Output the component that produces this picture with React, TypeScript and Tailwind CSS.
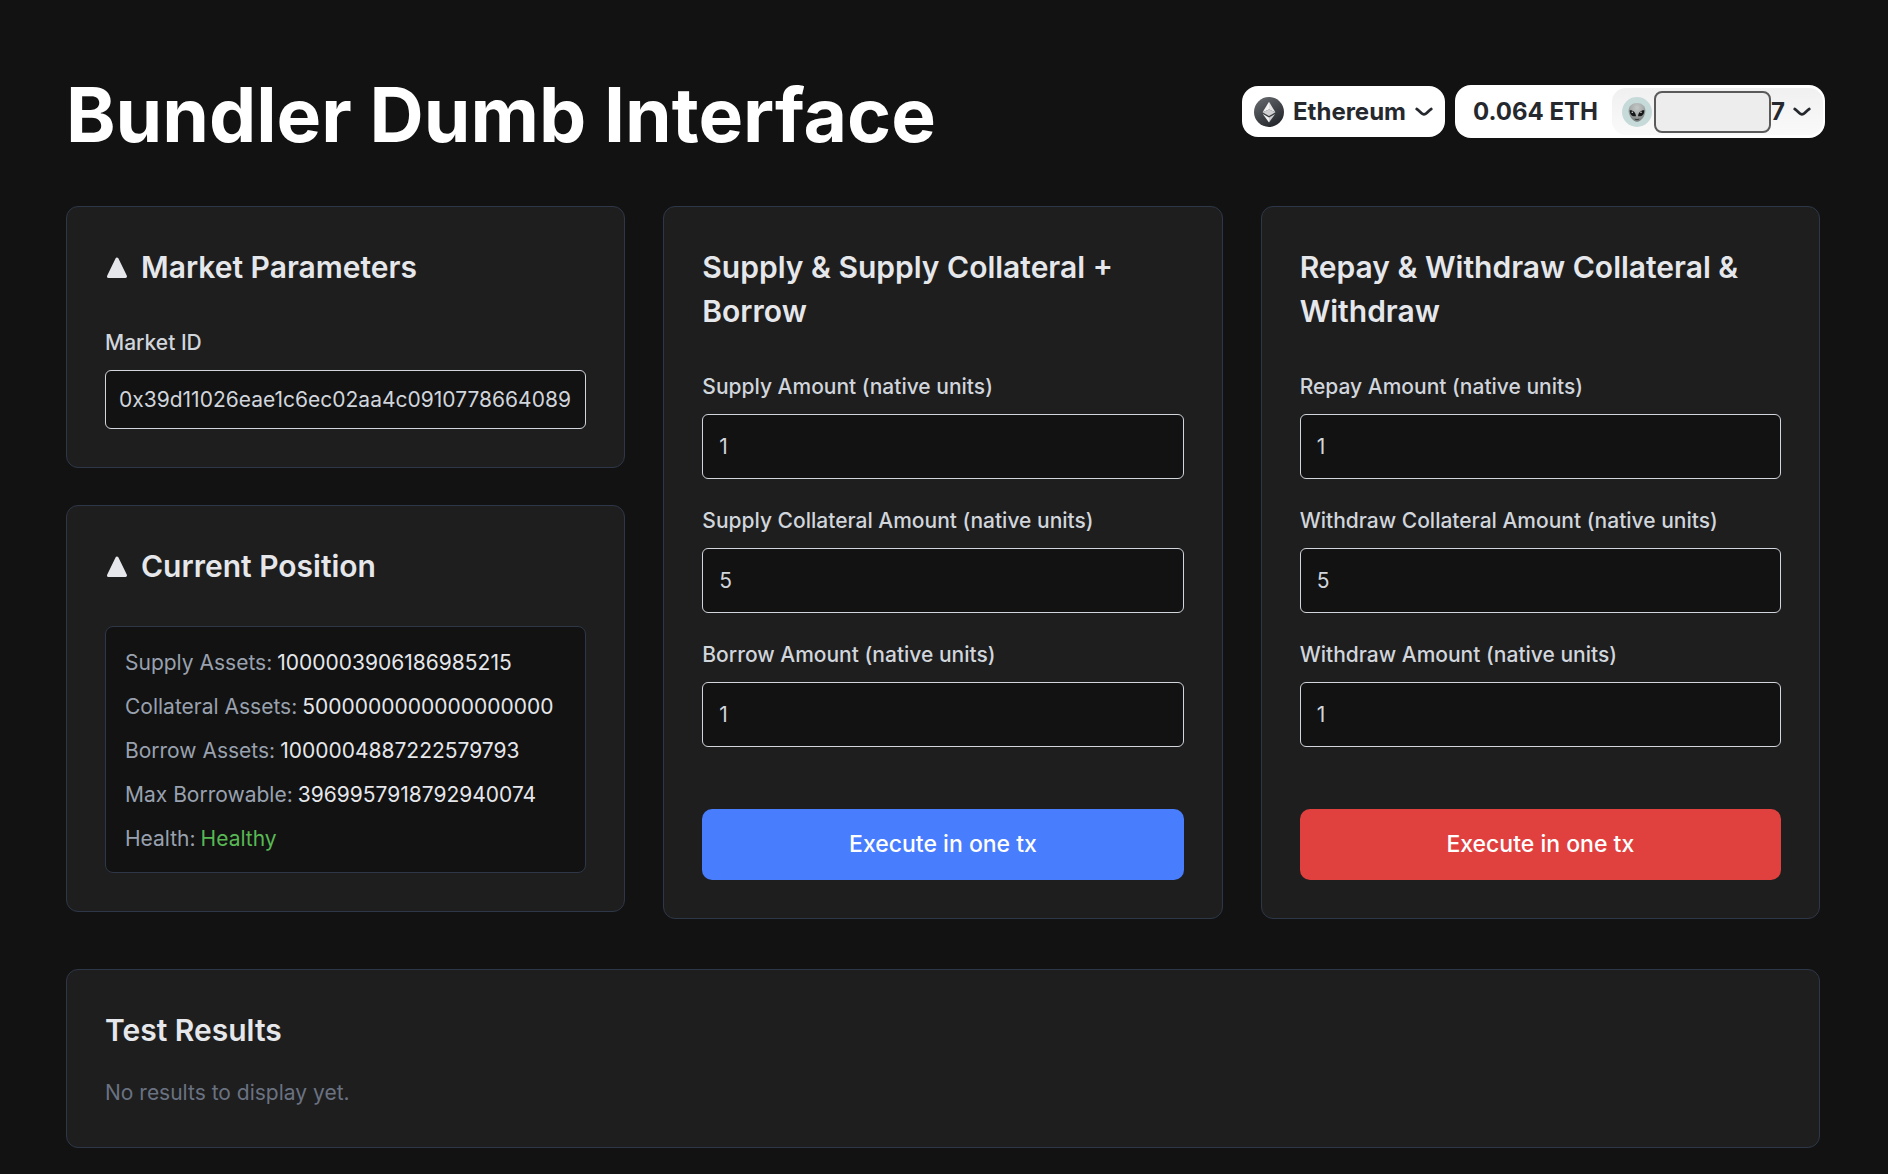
import { useId, useState, type ReactNode } from "react";

function Chevron() {
  return (
    <svg width="18" height="10" viewBox="0 0 18 10" fill="none" aria-hidden="true" className="shrink-0">
      <path
        d="M1.7 2 C4 3.2 6.8 7.4 9 7.4 C11.2 7.4 14 3.2 16.3 2"
        stroke="#25292e"
        strokeWidth="2.7"
        strokeLinecap="round"
      />
    </svg>
  );
}

function EthereumLogo() {
  return (
    <svg width="30" height="30" viewBox="0 0 30 30" aria-hidden="true" className="shrink-0">
      <defs>
        <linearGradient id="eth-disc" x1="0" y1="0" x2="0.6" y2="1">
          <stop offset="0" stopColor="#6b6e72" />
          <stop offset="1" stopColor="#25282c" />
        </linearGradient>
      </defs>
      <circle cx="15" cy="15" r="15" fill="url(#eth-disc)" />
      <path d="M15 4.8 L8.6 15.3 L15 12.5 Z" fill="#f4f4f4" />
      <path d="M15 4.8 L21.4 15.3 L15 12.5 Z" fill="#e4e4e4" />
      <path d="M8.6 15.3 L15 12.5 L21.4 15.3 L15 19 Z" fill="#d0d0d2" />
      <path d="M8.8 16.9 L15 20.5 V25.4 Z" fill="#f4f4f4" />
      <path d="M21.2 16.9 L15 20.5 V25.4 Z" fill="#cfcfd1" />
    </svg>
  );
}

function AlienAvatar() {
  return (
    <svg width="30" height="30" viewBox="0 0 30 30" aria-hidden="true" className="shrink-0">
      <defs>
        <radialGradient id="alien-skin" cx="0.5" cy="0.25" r="0.75">
          <stop offset="0" stopColor="#c3c8c7" />
          <stop offset="0.5" stopColor="#a8adac" />
          <stop offset="1" stopColor="#6f7473" />
        </radialGradient>
      </defs>
      <circle cx="15" cy="15" r="15" fill="#c5dad9" />
      <path
        d="M15 6 C20 6 23.4 9.2 23.4 13.8 C23.4 18.8 19 24.8 15 24.8 C11 24.8 6.6 18.8 6.6 13.8 C6.6 9.2 10 6 15 6 Z"
        fill="url(#alien-skin)"
      />
      <path d="M7.7 13.2 C10.7 12.8 13.7 15 14 19.2 C10.4 20 7.6 17.6 7.7 13.2 Z" fill="#161818" />
      <path d="M22.3 13.2 C19.3 12.8 16.3 15 16 19.2 C19.6 20 22.4 17.6 22.3 13.2 Z" fill="#161818" />
      <circle cx="10.3" cy="15.3" r="0.8" fill="#d8dcdb" />
      <circle cx="19" cy="15.3" r="0.8" fill="#d8dcdb" />
      <path d="M12.8 22 C14.2 22.9 15.8 22.9 17.2 22" stroke="#333636" strokeWidth="1" fill="none" />
    </svg>
  );
}

function Triangle() {
  return (
    <svg width="24" height="24" viewBox="0 0 24 24" aria-hidden="true" className="shrink-0">
      <path
        d="M12 4 L20.5 21.5 H3.5 Z"
        fill="#e5e7eb"
        stroke="#e5e7eb"
        strokeWidth="3"
        strokeLinejoin="round"
      />
    </svg>
  );
}

function Card({ children }: { children: ReactNode }) {
  return (
    <section className="rounded-xl border border-[#2d3748] bg-[#1e1e1e] p-[38px]">{children}</section>
  );
}

function CollapsibleCard({ title, children }: { title: string; children: ReactNode }) {
  const [open, setOpen] = useState(true);
  return (
    <Card>
      <h2 className="text-[30px] leading-[44px] font-semibold text-gray-200">
        <button
          type="button"
          aria-expanded={open}
          onClick={() => setOpen(!open)}
          className="flex items-center gap-3"
        >
          <Triangle />
          {title}
        </button>
      </h2>
      {open && <div className="mt-[38px]">{children}</div>}
    </Card>
  );
}

function Field({ label, initial, compact = false }: { label: string; initial: string; compact?: boolean }) {
  const id = useId();
  const [value, setValue] = useState(initial);
  return (
    <div>
      <label htmlFor={id} className="mb-[11px] block text-[21px] leading-8 font-medium text-gray-300">
        {label}
      </label>
      <input
        id={id}
        type="text"
        value={value}
        onChange={(e) => setValue(e.target.value)}
        className={`block w-full rounded-md border border-gray-300 bg-[#121212] text-[21px] text-gray-300 outline-none ${
          compact ? "h-[59px] px-[13px]" : "h-[65px] px-4"
        }`}
      />
    </div>
  );
}

function ActionCard({
  title,
  fields,
  buttonClass,
}: {
  title: string;
  fields: { label: string; value: string }[];
  buttonClass: string;
}) {
  return (
    <Card>
      <h2 className="text-[30px] leading-[44px] font-semibold text-gray-200">{title}</h2>
      <div className="mt-[38px] flex flex-col gap-[26px]">
        {fields.map((f) => (
          <Field key={f.label} label={f.label} initial={f.value} />
        ))}
      </div>
      <button
        type="button"
        className={`mt-[62px] h-[71px] w-full rounded-[10px] text-[23px] font-medium text-white ${buttonClass}`}
      >
        Execute in one tx
      </button>
    </Card>
  );
}

const position = [
  { label: "Supply Assets:", value: "1000003906186985215" },
  { label: "Collateral Assets:", value: "5000000000000000000" },
  { label: "Borrow Assets:", value: "1000004887222579793" },
  { label: "Max Borrowable:", value: "3969957918792940074" },
  { label: "Health:", value: "Healthy", healthy: true },
];

export default function App() {
  return (
    <div className="min-h-screen bg-[#121212] pt-16 pr-[68px] pb-7 pl-[66px] font-['Inter',sans-serif]">
      <header className="-mr-[5px] mb-10 flex items-start justify-between">
        <h1 className="text-[75px] leading-[102px] font-bold text-white">Bundler Dumb Interface</h1>
        <div className="mt-[21px] flex items-center gap-[10px] text-2xl font-bold text-[#25292e]">
          <button type="button" className="flex h-[51px] items-center gap-[9px] rounded-2xl bg-white px-3">
            <EthereumLogo />
            Ethereum
            <Chevron />
          </button>
          <button type="button" className="flex h-[53px] items-center rounded-2xl bg-white pr-[2px] pl-[18px]">
            <span className="pr-[14px]">0.064 ETH</span>
            <span className="flex h-[47px] items-center rounded-[14px] bg-linear-to-b from-[#f0f0f0] to-[#fafafa] pr-3 pl-[10px]">
              <AlienAvatar />
              <span className="ml-[2px] h-[42px] w-[117px] rounded-lg border-2 border-[#5a5a5a] bg-[#ededed]" />
              <span className="mr-2">7</span>
              <Chevron />
            </span>
          </button>
        </div>
      </header>

      <main>
        <div className="grid grid-cols-3 items-start gap-[38px]">
          <div className="flex flex-col gap-[37px]">
            <CollapsibleCard title="Market Parameters">
              <Field label="Market ID" initial="0x39d11026eae1c6ec02aa4c0910778664089" compact />
            </CollapsibleCard>
            <CollapsibleCard title="Current Position">
              <dl className="flex flex-col gap-3 rounded-lg border border-[#2d3748] bg-[#121212] px-[19px] pt-5 pb-[17px] text-[21px] leading-8">
                {position.map((row) => (
                  <div key={row.label} className="flex gap-[5px]">
                    <dt className="text-gray-400">{row.label}</dt>
                    <dd className={row.healthy ? "text-[#58b854]" : "text-gray-200"}>{row.value}</dd>
                  </div>
                ))}
              </dl>
            </CollapsibleCard>
          </div>
          <ActionCard
            title="Supply & Supply Collateral + Borrow"
            fields={[
              { label: "Supply Amount (native units)", value: "1" },
              { label: "Supply Collateral Amount (native units)", value: "5" },
              { label: "Borrow Amount (native units)", value: "1" },
            ]}
            buttonClass="bg-[#487dfd]"
          />
          <ActionCard
            title="Repay & Withdraw Collateral & Withdraw"
            fields={[
              { label: "Repay Amount (native units)", value: "1" },
              { label: "Withdraw Collateral Amount (native units)", value: "5" },
              { label: "Withdraw Amount (native units)", value: "1" },
            ]}
            buttonClass="bg-[#e0413f]"
          />
        </div>

        <div className="mt-[50px]">
          <Card>
            <h2 className="text-[30px] leading-[44px] font-semibold text-gray-200">Test Results</h2>
            <p className="mt-[25px] text-[21px] leading-8 text-gray-500">No results to display yet.</p>
          </Card>
        </div>
      </main>
    </div>
  );
}
